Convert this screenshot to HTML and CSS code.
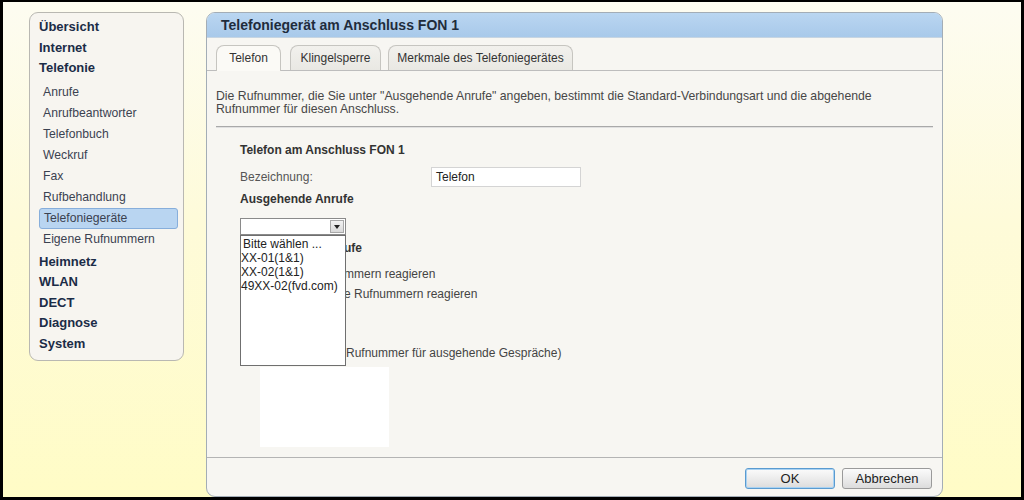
FILE: index.html
```html
<!DOCTYPE html>
<html lang="de">
<head>
<meta charset="utf-8">
<title>Telefoniegerät am Anschluss FON 1</title>
<link rel="stylesheet" href="styles.css">
</head>
<body>
<div class="frame">
  <nav class="nav">
    <a class="nav-main">Übersicht</a>
    <a class="nav-main">Internet</a>
    <a class="nav-main">Telefonie</a>
    <div class="nav-sub">
      <a class="sub-item">Anrufe</a>
      <a class="sub-item">Anrufbeantworter</a>
      <a class="sub-item">Telefonbuch</a>
      <a class="sub-item">Weckruf</a>
      <a class="sub-item">Fax</a>
      <a class="sub-item">Rufbehandlung</a>
      <a class="sub-item active">Telefoniegeräte</a>
      <a class="sub-item">Eigene Rufnummern</a>
    </div>
    <div class="nav-rest">
      <a class="nav-main">Heimnetz</a>
      <a class="nav-main">WLAN</a>
      <a class="nav-main">DECT</a>
      <a class="nav-main">Diagnose</a>
      <a class="nav-main">System</a>
    </div>
  </nav>

  <main class="panel">
    <header class="panel-head">Telefoniegerät am Anschluss FON 1</header>
    <div class="panel-body">
      <div class="tabs">
        <span class="tab active">Telefon</span>
        <span class="tab tab-2">Klingelsperre</span>
        <span class="tab tab-3">Merkmale des Telefoniegerätes</span>
      </div>
      <div class="content">
        <p class="intro">Die Rufnummer, die Sie unter "Ausgehende Anrufe" angeben, bestimmt die Standard-Verbindungsart und die abgehende Rufnummer für diesen Anschluss.</p>
        <hr class="rule">
        <div class="section">
          <h2 class="sec-title">Telefon am Anschluss FON 1</h2>
          <div class="field-row">
            <span class="field-label">Bezeichnung:</span>
            <span class="input">Telefon</span>
          </div>
          <h2 class="sec-title sec-out">Ausgehende Anrufe</h2>
          <div class="select-wrap">
            <div class="select"><span class="select-btn"><span class="arrow"></span></span></div>
            <div class="listbox">
              <div class="opt opt-first">Bitte wählen ...</div>
              <div class="opt">XX-01(1&amp;1)</div>
              <div class="opt">XX-02(1&amp;1)</div>
              <div class="opt">49XX-02(fvd.com)</div>
            </div>
          </div>
          <div class="behind">
            <div class="behind-title">ufe</div>
            <div class="behind-row">mmern reagieren</div>
            <div class="behind-row behind-row-2">e Rufnummern reagieren</div>
            <div class="behind-num">(Rufnummer für ausgehende Gespräche)</div>
          </div>
          <div class="blank-box"></div>
        </div>
      </div>
      <footer class="panel-foot">
        <button class="btn btn-ok">OK</button>
        <button class="btn">Abbrechen</button>
      </footer>
    </div>
  </main>
</div>
</body>
</html>
```

FILE: styles.css
```css
* { box-sizing: border-box; }
html, body { margin: 0; padding: 0; }
body {
  background: #000;
  width: 1024px;
  height: 500px;
  overflow: hidden;
  font-family: "Liberation Sans", Arial, sans-serif;
}
.frame {
  margin: 2px 3px 0 3px;
  height: 495px;
  overflow: hidden;
  background: linear-gradient(180deg, #fdfcf1 0%, #fefbd9 45%, #fffcc6 100%);
  display: flex;
  align-items: flex-start;
  padding: 10px 0 0 26px;
}

/* ---------- navigation ---------- */
.nav {
  width: 155px;
  height: 349px;
  flex: none;
  background: #f7f5f0;
  border: 1px solid #b9b8b2;
  border-radius: 9px;
  padding: 4px 0 0 9px;
  display: flex;
  flex-direction: column;
}
.nav a { display: block; text-decoration: none; cursor: pointer; }
.nav-main {
  height: 20.5px;
  line-height: 20.5px;
  font-size: 13px;
  font-weight: bold;
  color: #1b2c47;
}
.nav-sub { margin-top: 3px; display: flex; flex-direction: column; }
.sub-item {
  height: 21px;
  line-height: 21px;
  font-size: 12.2px;
  color: #3b4250;
  padding-left: 4px;
  margin-right: 5px;
}
.sub-item.active {
  background: #b9d5f1;
  border: 1px solid #87aedb;
  border-radius: 3px;
  line-height: 19px;
}
.nav-rest { margin-top: 2px; display: flex; flex-direction: column; }

/* ---------- panel ---------- */
.panel {
  margin-left: 22px;
  width: 737px;
  height: 485px;
  flex: none;
  display: flex;
  flex-direction: column;
  border: 1px solid #a3adb6;
  border-radius: 9px;
  background: #f7f6f2;
  overflow: hidden;
}
.panel-head {
  height: 25px;
  flex: none;
  background: linear-gradient(180deg, #bad6f1 0%, #a8c9ea 100%);
  border-bottom: 1px solid #c6d5e2;
  padding-left: 14px;
  line-height: 24px;
  font-size: 14px;
  font-weight: bold;
  color: #1f2c3c;
}
.panel-body {
  flex: 1;
  display: flex;
  flex-direction: column;
}
.tabs {
  display: flex;
  align-items: flex-end;
  height: 33px;
  flex: none;
  padding: 7px 0 0 9px;
  border-bottom: 1px solid #bdbdbd;
}
.tab {
  height: 25px;
  line-height: 24px;
  font-size: 12px;
  color: #333;
  border: 1px solid #c6c5c0;
  border-bottom: none;
  border-radius: 8px 8px 0 0;
  background: linear-gradient(180deg, #f2f1ed 0%, #e9e8e3 100%);
  text-align: center;
  padding: 0;
}
.tab.active {
  background: #fbfaf6;
  height: 26px;
  margin-bottom: -1px;
  width: 65px;
  margin-right: 9px;
}
.tab-2 { width: 91px; margin-right: 7px; }
.tab-3 { width: 185px; }

.content {
  flex: 1;
  padding: 0 9px;
}
.intro {
  margin: 19px 0 0 0;
  font-size: 12.25px;
  line-height: 13px;
  color: #474747;
  width: 705px;
}
.rule {
  margin: 10px 0 0 0;
  border: none;
  border-top: 1px solid #a9a9a9;
  border-bottom: 1px solid #e0e0e0;
  height: 0;
}
.section { padding-left: 24px; }
.sec-title {
  margin: 0;
  font-size: 12px;
  font-weight: bold;
  line-height: 16px;
  color: #333;
}
.section > .sec-title:first-child { margin-top: 14px; }
.field-row {
  display: flex;
  align-items: center;
  margin-top: 9px;
  height: 20px;
  font-size: 12px;
  color: #555;
}
.field-label { width: 191px; }
.input {
  width: 150px;
  height: 20px;
  border: 1px solid #d4d4d4;
  background: #fff;
  color: #222;
  padding-left: 4px;
  line-height: 18px;
  font-size: 12px;
}
.sec-out { margin-top: 4px; }
.select-wrap {
  position: relative;
  margin-top: 11px;
  width: 106px;
  height: 17px;
}
.select {
  width: 106px;
  height: 17px;
  border: 1px solid #8a8a8a;
  background: #fff;
  display: flex;
  justify-content: flex-end;
  padding: 1px;
}
.select-btn {
  width: 14px;
  height: 13px;
  background: linear-gradient(180deg, #f2f2f2, #d9d9d9);
  border: 1px solid #a8a8a8;
  display: flex;
  align-items: center;
  justify-content: center;
}
.arrow {
  width: 0; height: 0;
  border-left: 3px solid transparent;
  border-right: 3px solid transparent;
  border-top: 4px solid #222;
}
.listbox {
  position: absolute;
  left: 0;
  top: 17px;
  width: 106px;
  height: 131px;
  background: #fff;
  border: 1px solid #6f6f6f;
  z-index: 5;
  padding-top: 1px;
  font-size: 12px;
  color: #222;
}
.opt { height: 14px; line-height: 14px; white-space: nowrap; }
.opt-first { padding-left: 2px; }

/* content partly covered by the open list */
.behind {
  padding-left: 104px;
  font-size: 12px;
  color: #444;
}
.behind-title {
  margin-top: 5px;
  line-height: 16px;
  font-weight: bold;
  color: #333;
}
.behind-row {
  margin-top: 9px;
  line-height: 18px;
}
.behind-row-2 { margin-top: 2px; }
.behind-num {
  margin-top: 42px;
  line-height: 16px;
  margin-left: -2px;
}
.blank-box {
  margin: 6px 0 0 20px;
  width: 129px;
  height: 80px;
  background: #fff;
}
.panel-foot {
  height: 39px;
  flex: none;
  border-top: 1px solid #b4b4b4;
  display: flex;
  justify-content: flex-end;
  align-items: flex-start;
  padding: 10px 10px 0 0;
  gap: 7px;
}
.btn {
  width: 90px;
  height: 21px;
  font-family: "Liberation Sans", Arial, sans-serif;
  font-size: 13px;
  color: #222;
  border: 1px solid #9a9a9a;
  border-radius: 3px;
  background: linear-gradient(180deg, #fbfbfb 0%, #ececec 50%, #dcdcdc 100%);
  padding: 0;
}
.btn-ok {
  border-color: #5a9bd0;
  box-shadow: inset 0 0 0 1px #a9d2f2;
}
```
